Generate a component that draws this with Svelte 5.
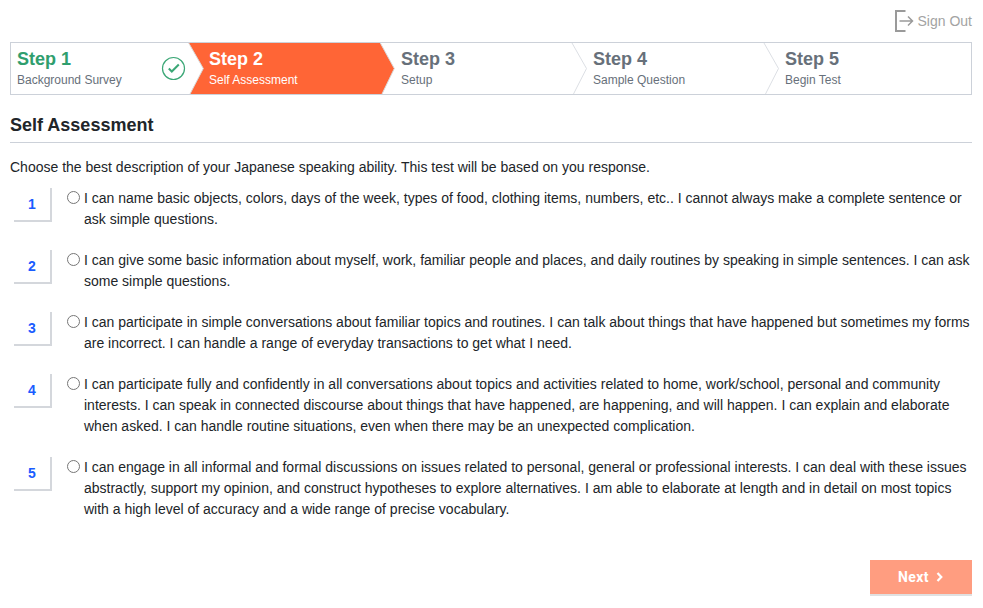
<script>
  const steps = [
    { title: 'Step 1', sub: 'Background Survey', state: 'done' },
    { title: 'Step 2', sub: 'Self Assessment', state: 'active' },
    { title: 'Step 3', sub: 'Setup', state: '' },
    { title: 'Step 4', sub: 'Sample Question', state: '' },
    { title: 'Step 5', sub: 'Begin Test', state: '' }
  ];

  const options = [
    'I can name basic objects, colors, days of the week, types of food, clothing items, numbers, etc.. I cannot always make a complete sentence or ask simple questions.',
    'I can give some basic information about myself, work, familiar people and places, and daily routines by speaking in simple sentences. I can ask some simple questions.',
    'I can participate in simple conversations about familiar topics and routines. I can talk about things that have happened but sometimes my forms are incorrect. I can handle a range of everyday transactions to get what I need.',
    'I can participate fully and confidently in all conversations about topics and activities related to home, work/school, personal and community interests. I can speak in connected discourse about things that have happened, are happening, and will happen. I can explain and elaborate when asked. I can handle routine situations, even when there may be an unexpected complication.',
    'I can engage in all informal and formal discussions on issues related to personal, general or professional interests. I can deal with these issues abstractly, support my opinion, and construct hypotheses to explore alternatives. I am able to elaborate at length and in detail on most topics with a high level of accuracy and a wide range of precise vocabulary.'
  ];
</script>

<div class="page">
  <div class="topbar">
    <a class="signout" href="#signout">
      <svg width="20" height="22" viewBox="0 0 20 22" fill="none" stroke="#9a9a9a">
        <path d="M11.5 1H2v20h9.5" stroke-width="2" />
        <path d="M5.5 11h13M14 6.5l4.5 4.5-4.5 4.5" stroke-width="1.5" />
      </svg>
      <span>Sign Out</span>
    </a>
  </div>

  <div class="stepper">
    {#each steps as step, i}
      <div class="step {step.state}">
        {#if step.state === 'active'}
          <svg class="fill" width="208" height="51" viewBox="0 0 208 51">
            <path d="M0.7 0H192.3L206.3 25.5L194 51H2L15.3 25.5Z" fill="#ff6536" />
            <path d="M0.7 0L15.3 25.5L2 51M192.3 0L206.3 25.5L194 51" fill="none" stroke="#d8d8d8" />
          </svg>
        {:else if i > 1 && i < 4}
          <svg class="arrow" width="16" height="51" viewBox="0 0 16 51">
            <path d="M1 0L15.5 25.5L2.5 51" fill="none" stroke="#dcdfe4" />
          </svg>
        {/if}
        <div class="step-title">{step.title}</div>
        <div class="step-sub">{step.sub}</div>
        {#if step.state === 'done'}
          <svg class="check" width="25" height="25" viewBox="0 0 25 25" fill="none" stroke="#3ba776">
            <circle cx="12.5" cy="12.5" r="11" stroke-width="1.2" />
            <path d="M7.8 12.5l3 3 7-7" stroke-width="2" />
          </svg>
        {/if}
      </div>
    {/each}
  </div>

  <h2>Self Assessment</h2>
  <p class="intro">Choose the best description of your Japanese speaking ability. This test will be based on you response.</p>

  <div class="options">
    {#each options as text, i}
      <div class="option">
        <div class="num">{i + 1}</div>
        <input type="radio" name="level" id="level{i}" />
        <label for="level{i}">{text}</label>
      </div>
    {/each}
  </div>

  <div class="footer">
    <button class="next">
      Next
      <svg width="8" height="10" viewBox="0 0 8 10" fill="none" stroke="#fff" stroke-width="2.2">
        <path d="M1.5 1l3.8 4-3.8 4" />
      </svg>
    </button>
  </div>
</div>

<style>
:global(body) {
  margin: 0;
  background: #fff;
}

.page {
  box-sizing: border-box;
  display: flex;
  flex-direction: column;
  width: 983px;
  height: 608px;
  padding: 0 11px 12px 10px;
  font-family: "Liberation Sans", Arial, sans-serif;
  color: #212529;
}

.topbar {
  flex: none;
  height: 42px;
  display: flex;
  justify-content: flex-end;
  align-items: flex-start;
}

.signout {
  display: flex;
  align-items: center;
  gap: 4px;
  margin-top: 10px;
  color: #a3a3a3;
  font-size: 14px;
  text-decoration: none;
}

.stepper {
  flex: none;
  display: grid;
  grid-template-columns: repeat(5, 192px);
  height: 51px;
  border: 1px solid #ccd1d9;
  width: 960px;
}

.step {
  position: relative;
  padding: 6px 0 0 6px;
  color: #67707a;
}

.step .fill {
  position: absolute;
  left: -15px;
  top: 0;
}

.step .arrow {
  position: absolute;
  right: 0;
  top: 0;
}

.step-title {
  position: relative;
  font-size: 18px;
  line-height: 21px;
  font-weight: bold;
}

.step-sub {
  position: relative;
  font-size: 12px;
  line-height: 14px;
  margin-top: 3px;
}

.done .step-title {
  color: #2f9e6e;
}

.active .step-title,
.active .step-sub {
  color: #fff;
}

.check {
  position: absolute;
  left: 150px;
  top: 13px;
}

h2 {
  flex: none;
  margin: 0;
  padding: 20px 0 6px;
  font-size: 18px;
  line-height: 21px;
  border-bottom: 1px solid #ccd1d9;
}

.intro {
  margin: 15px 0 0;
  font-size: 14px;
  line-height: 18px;
}

.options {
  margin-top: 12px;
  display: flex;
  flex-direction: column;
  gap: 20px;
}

.option {
  display: flex;
  align-items: flex-start;
  font-size: 14px;
  line-height: 21px;
}

.num {
  flex: none;
  box-sizing: border-box;
  width: 38px;
  height: 34px;
  margin: 0 0 0 4px;
  border-right: 2px solid #d4d7dc;
  border-bottom: 2px solid #d4d7dc;
  color: #1a5cff;
  font-weight: bold;
  font-size: 14px;
  line-height: 32px;
  text-align: center;
}

input {
  flex: none;
  width: 13px;
  height: 13px;
  margin: 3px 4px 0 15px;
}

.footer {
  margin-top: auto;
  display: flex;
  justify-content: flex-end;
}

.next {
  display: flex;
  align-items: center;
  justify-content: center;
  gap: 7px;
  width: 102px;
  height: 34px;
  border: 0;
  border-bottom: 2px solid #e0e0e0;
  box-sizing: content-box;
  padding: 0;
  background: #ff9d80;
  color: #fff;
  font-family: Roboto, "Liberation Sans", sans-serif;
  font-weight: bold;
  font-size: 14px;
  letter-spacing: 0.4px;
}
</style>
